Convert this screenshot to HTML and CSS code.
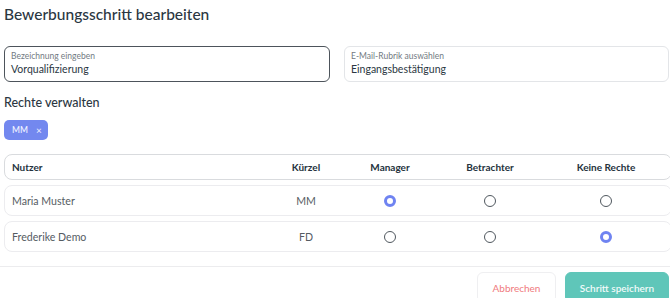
FILE: index.html
```html
<!DOCTYPE html>
<html lang="de">
<head>
<meta charset="utf-8">
<title>Bewerbungsschritt bearbeiten</title>
<link rel="stylesheet" href="styles.css">
</head>
<body>
<div class="page">
  <h1 class="title">Bewerbungsschritt bearbeiten</h1>

  <div class="fields">
    <div class="field field--active">
      <span class="field-label">Bezeichnung eingeben</span>
      <span class="field-value">Vorqualifizierung</span>
    </div>
    <div class="field">
      <span class="field-label">E-Mail-Rubrik auswählen</span>
      <span class="field-value">Eingangsbestätigung</span>
    </div>
  </div>

  <h2 class="section-title">Rechte verwalten</h2>

  <div class="chips">
    <span class="chip">MM <span class="chip-x">×</span></span>
  </div>

  <div class="table">
    <div class="row row--head">
      <span class="cell cell--name">Nutzer</span>
      <span class="cell">Kürzel</span>
      <span class="cell">Manager</span>
      <span class="cell">Betrachter</span>
      <span class="cell">Keine Rechte</span>
    </div>
    <div class="row">
      <span class="cell cell--name">Maria Muster</span>
      <span class="cell">MM</span>
      <span class="cell"><span class="radio radio--on"></span></span>
      <span class="cell"><span class="radio"></span></span>
      <span class="cell"><span class="radio"></span></span>
    </div>
    <div class="row">
      <span class="cell cell--name">Frederike Demo</span>
      <span class="cell">FD</span>
      <span class="cell"><span class="radio"></span></span>
      <span class="cell"><span class="radio"></span></span>
      <span class="cell"><span class="radio radio--on"></span></span>
    </div>
  </div>
</div>

<div class="footer">
  <button class="btn btn--cancel">Abbrechen</button>
  <button class="btn btn--save">Schritt speichern</button>
</div>
</body>
</html>
```

FILE: styles.css
```css
* { box-sizing: border-box; }

html, body {
  margin: 0;
  padding: 0;
  background: #ffffff;
}

body {
  width: 670px;
  height: 298px;
  overflow: hidden;
  font-family: Lato, "Open Sans", Arial, sans-serif;
  color: #2b3742;
}

.page {
  padding: 0 0 0 4px;
}

.title {
  margin: 0;
  padding-top: 4px;
  font-size: 15.5px;
  line-height: 20px;
  font-weight: 500;
  color: #2b3742;
}

.fields {
  display: grid;
  grid-template-columns: 326px 325px;
  column-gap: 14px;
  margin-top: 22px;
}

.field {
  height: 36px;
  border: 1px solid #e3e5e8;
  border-radius: 6px;
  padding: 4px 0 0 6px;
  display: flex;
  flex-direction: column;
}

.field--active {
  border-color: #4d545b;
}

.field-label {
  font-size: 8.5px;
  line-height: 11px;
  color: #727a82;
}

.field-value {
  font-size: 10.5px;
  line-height: 14px;
  color: #2b3742;
}

.section-title {
  margin: 13px 0 0;
  font-size: 12.5px;
  line-height: 16px;
  font-weight: 500;
  color: #2b3742;
}

.chips {
  margin-top: 9px;
  display: flex;
}

.chip {
  height: 20px;
  width: 44px;
  border-radius: 5px;
  background: #7388ef;
  color: #eef0ff;
  font-size: 8.5px;
  font-weight: 600;
  display: flex;
  align-items: center;
  padding-left: 8px;
  gap: 8px;
}

.chip-x {
  font-size: 10px;
  font-weight: 400;
}

.table {
  margin-top: 14px;
  display: flex;
  flex-direction: column;
  gap: 5px;
}

.row {
  width: 668px;
  display: grid;
  grid-template-columns: 256px 76px 92px 108px 124px;
  align-items: center;
  height: 31px;
  border: 1px solid #ececef;
  border-radius: 8px;
  padding: 0 0 0 7px;
  font-size: 10.6px;
  color: #555c63;
}

.row--head {
  height: 26px;
  border-color: #d9dbde;
  font-size: 10px;
  font-weight: 700;
  color: #25323d;
}

.cell {
  text-align: center;
  display: flex;
  justify-content: center;
  align-items: center;
}

.cell--name {
  justify-content: flex-start;
}

.radio {
  width: 12px;
  height: 12px;
  border-radius: 50%;
  border: 1.2px solid #50585f;
  background: #fff;
}

.radio--on {
  border: 3.5px solid #6f83f1;
}

.footer {
  margin-top: 14px;
  border-top: 1px solid #ececee;
  display: flex;
  justify-content: flex-end;
  gap: 9px;
  padding: 5px 1px 0 0;
}

.btn {
  height: 31px;
  border-radius: 6px;
  font-family: Lato, "Open Sans", Arial, sans-serif;
  font-size: 10px;
  padding: 0;
  cursor: pointer;
}

.btn--cancel {
  width: 79px;
  background: #fff;
  border: 1px solid #efeff1;
  color: #f07b7e;
}

.btn--save {
  width: 104px;
  background: #5fc6b9;
  border: 1px solid #5fc6b9;
  color: #f2fbfa;
  font-weight: 600;
}
```
